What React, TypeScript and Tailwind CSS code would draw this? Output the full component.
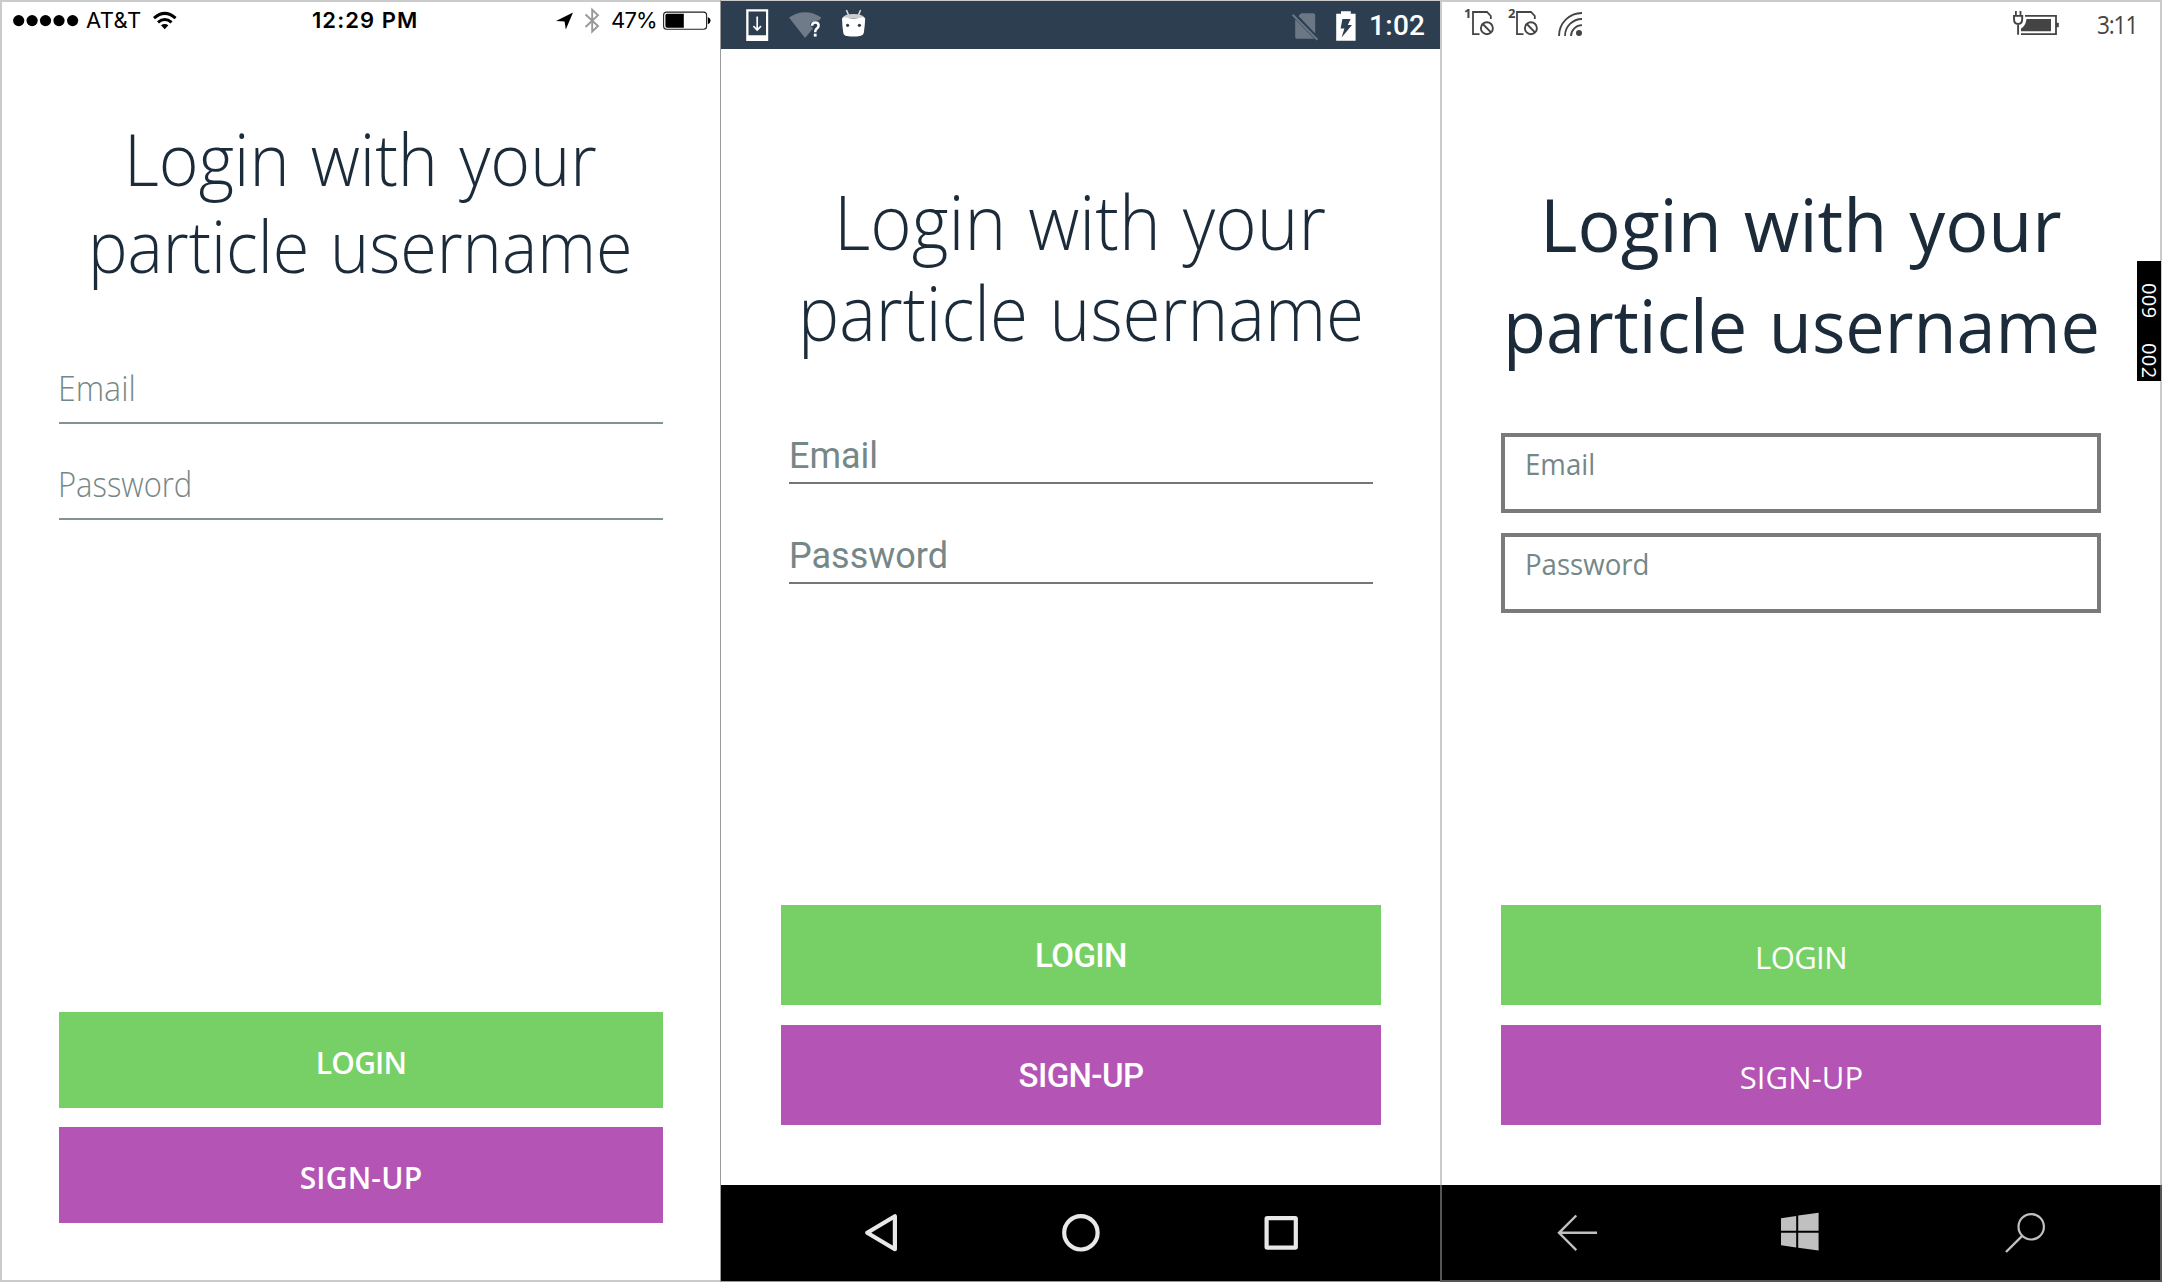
import React from "react";

/* ---------- status bar icons ---------- */

function SignalDots() {
  return (
    <svg className="ml-[11px] mt-[12px] h-[14px] w-[66px] shrink-0" viewBox="13 14 66 14">
      {[18.7, 32.1, 45.5, 59, 72.6].map((cx) => (
        <circle key={cx} cx={cx} cy="20.6" r="5.6" fill="#000" />
      ))}
    </svg>
  );
}

function IosWifi() {
  return (
    <svg className="ml-[11px] mt-[8px] h-[20px] w-[26px] shrink-0" viewBox="152 10 26 20">
      <g fill="none" stroke="#000" strokeWidth="3">
        <path d="M154 18.2 Q164.7 8.6 175.6 18.2" />
        <path d="M158 22.3 Q164.7 16.6 171.6 22.3" />
      </g>
      <path d="M161 25.3 Q164.7 22.6 168.4 25.3 L164.7 29.3 Z" fill="#000" />
    </svg>
  );
}

function LocationArrow() {
  return (
    <svg className="ml-[139px] mt-[10px] h-[19px] w-[19px] shrink-0" viewBox="555 12 19 19">
      <path d="M573 12.6 L565.8 29.6 L564.6 21.4 L556 21 Z" fill="#000" />
    </svg>
  );
}

function Bluetooth() {
  return (
    <svg className="ml-[9px] mt-[5px] h-[28px] w-[18px] shrink-0" viewBox="583 7 18 28">
      <path
        d="M585.5 14.5 L598 26 L592.2 31.5 V9.8 L598 15.3 L585.5 27"
        fill="none"
        stroke="#999"
        strokeWidth="1.9"
      />
    </svg>
  );
}

function IosBattery() {
  return (
    <svg className="ml-[5px] mt-[9px] h-[20px] w-[50px] shrink-0" viewBox="662 11 50 20">
      <rect x="663.6" y="12.1" width="43" height="17.2" rx="3" fill="none" stroke="#222" strokeWidth="1.1" />
      <path d="M667 13.8 H683.8 V27.7 H667 Q665.4 27.7 665.4 26 V15.5 Q665.4 13.8 667 13.8 Z" fill="#000" />
      <path d="M707.8 17 Q710.6 18 710.6 20.6 Q710.6 23.2 707.8 24.2 Z" fill="#000" />
    </svg>
  );
}

function DownloadDevice() {
  return (
    <svg className="ml-[25px] mt-[8px] h-[33px] w-[23px] shrink-0" viewBox="746 9 23 33">
      <path fillRule="evenodd" d="M746.2 9.3 H768.2 V41 H746.2 Z M748.5 11.5 V35.2 H766 V11.5 Z" fill="#fff" />
      <path d="M757.2 16.5 V29.5 M753.4 26.2 L757.2 30 L761 26.2" fill="none" stroke="#fff" strokeWidth="1.7" />
    </svg>
  );
}

function AndroidWifi() {
  return (
    <svg className="ml-[19px] mt-[10px] h-[28px] w-[35px] shrink-0" viewBox="788 11 35 28">
      <path d="M789 17.6 Q805 6.8 821.3 17.6 L819 20.6 Q813.5 19.8 810.4 23 Q809.4 26 812 27 L813 28.5 L805 38 Z" fill="#6f7b88" />
      <path
        d="M812 25.8 Q812.2 22.4 815.4 22.4 Q818.6 22.4 818.6 25.5 Q818.6 27.2 816.8 28.6 Q815.2 29.9 815.2 32.2"
        fill="none"
        stroke="#fff"
        strokeWidth="2.5"
      />
      <rect x="813.8" y="33.7" width="2.8" height="2.9" fill="#fff" />
    </svg>
  );
}

function AndroidHead() {
  return (
    <svg className="ml-[18px] mt-[8px] h-[29px] w-[26px] shrink-0" viewBox="841 9 26 29">
      <path d="M846.4 10 L848.8 15.6 M860.6 10 L858.2 15.6" stroke="#ddd" strokeWidth="1.5" />
      <path d="M842.6 18 Q844 14 853.5 13.9 Q863 14 864.6 18 Z" fill="#ccc" />
      <path d="M842 18.6 Q843 16.8 846 17.6 Q853.5 19.4 861 17.6 Q864.2 16.8 865.2 18.6 Q864.8 27 863.8 33 Q863.2 35.6 860 36 Q853.5 37.2 847 36 Q843.8 35.6 843.3 33 Q842.2 27 842 18.6 Z" fill="#fff" />
      <circle cx="847.6" cy="25.3" r="1.6" fill="#2c3e50" />
      <circle cx="859.4" cy="25.3" r="1.6" fill="#2c3e50" />
    </svg>
  );
}

function NoSim() {
  return (
    <svg className="ml-auto mt-[11px] h-[29px] w-[28px] shrink-0" viewBox="1291 11 28 29">
      <path d="M1301 12.2 H1313.5 Q1315.2 12.2 1315.2 14 V32.5 L1298.5 15 Z" fill="#6b7784" />
      <path d="M1295.2 18.3 L1314 37.4 Q1313.6 37.8 1313 37.8 H1297 Q1295.2 37.8 1295.2 36 Z" fill="#6b7784" />
      <path d="M1292.6 13.8 L1317.4 38.8" stroke="#6b7784" strokeWidth="2" />
    </svg>
  );
}

function ChargingBattery() {
  return (
    <svg className="ml-[16px] mt-[9px] h-[31px] w-[21px] shrink-0" viewBox="1335 9 21 31">
      <path d="M1341 10.2 H1350.8 V12.7 H1355.6 V39.8 H1336.2 V12.7 H1341 Z" fill="#fff" />
      <path d="M1342.4 18 H1350.6 L1347.8 24 H1352 L1341.6 36.6 L1344.4 27.6 H1340.6 Z" fill="#2c3e50" />
    </svg>
  );
}

function SimBlocked({ slot }: { slot: "1" | "2" }) {
  return (
    <div className="flex h-[36px] w-[32px] shrink-0">
      <span className="mt-[2px] w-[7px] font-['Open_Sans',sans-serif] text-[13px] leading-[18px] font-bold text-[#444]">{slot}</span>
      <svg className="mt-[8px] h-[27px] w-[24px] shrink-0" viewBox="1472 11 24 27">
        <path d="M1480.5 35.2 H1474 V13 H1488 L1491.8 17 V20" fill="none" stroke="#444" strokeWidth="1.8" />
        <circle cx="1487.9" cy="29.2" r="6" fill="none" stroke="#444" strokeWidth="1.9" />
        <path d="M1483.8 25 L1492 33.4" stroke="#444" strokeWidth="1.9" />
      </svg>
    </div>
  );
}

function CellWifi() {
  return (
    <svg className="ml-[17px] mt-[9px] h-[27px] w-[26px] shrink-0" viewBox="1558 11 26 27">
      <g fill="none" stroke="#444" strokeWidth="1.8">
        <path d="M1560 36 A23 23 0 0 1 1583 13" />
        <path d="M1566 36 A17 17 0 0 1 1583 19" />
        <path d="M1572 36 A11 11 0 0 1 1583 25.2" />
      </g>
      <circle cx="1580" cy="33" r="3" fill="#444" />
    </svg>
  );
}

function PluggedBattery() {
  return (
    <svg className="ml-auto mt-[8px] h-[27px] w-[49px] shrink-0" viewBox="2012 10 49 27">
      <path d="M2025 15.8 H2056 V34.2 H2021" fill="none" stroke="#444" strokeWidth="1.8" />
      <rect x="2056" y="22.8" width="2.8" height="4.4" fill="#444" />
      <path d="M2026.5 19 H2051 V31.2 H2021 V28.5 Q2025 26 2026 21.5 Z" fill="#444" />
      <path d="M2015.9 11 V16 M2020.5 11 V16" stroke="#444" strokeWidth="1.8" />
      <path d="M2013 15.9 H2023.2 M2014 16 V19 Q2014 24 2018.1 24 Q2022.2 24 2022.2 19 V16 M2018.1 24 V34.8" fill="none" stroke="#444" strokeWidth="1.9" />
    </svg>
  );
}

/* ---------- navigation bars ---------- */

function AndroidNav() {
  return (
    <nav className="flex h-[96px] items-start bg-black">
      <svg className="ml-[142px] mt-[27px] h-[42px] w-[36px]" viewBox="863 1212 36 42">
        <path d="M867.2 1232.7 L894.9 1216.3 V1249.2 Z" fill="none" stroke="#e8e8e8" strokeWidth="4.2" strokeLinejoin="round" />
      </svg>
      <svg className="ml-[161px] mt-[27px] h-[42px] w-[42px]" viewBox="1060 1212 42 42">
        <circle cx="1080.9" cy="1232.8" r="16.7" fill="none" stroke="#e8e8e8" strokeWidth="4.2" />
      </svg>
      <svg className="ml-[161px] mt-[29px] h-[38px] w-[38px]" viewBox="1263 1214 38 38">
        <rect x="1266.6" y="1218.2" width="29.2" height="29.4" rx="0.6" fill="none" stroke="#e8e8e8" strokeWidth="4.2" />
      </svg>
    </nav>
  );
}

function WindowsNav() {
  return (
    <nav className="-mx-[2px] flex h-[97px] items-start border-x-2 border-b-2 border-[#555] bg-black">
      <svg className="ml-[113px] mt-[27px] h-[42px] w-[44px]" viewBox="1555 1212 44 42">
        <path d="M1597 1232.8 H1559.2 M1576.3 1215.5 L1559 1232.8 L1576.3 1250.2" fill="none" stroke="#c0c0c0" strokeWidth="2.4" />
      </svg>
      <svg className="ml-[180px] mt-[26px] h-[42px] w-[42px]" viewBox="1779 1211 42 42">
        <g fill="#c0c0c0">
          <path d="M1781 1218.2 L1796.2 1216 V1230.8 H1781 Z" />
          <path d="M1798.2 1215.6 L1818.6 1212.8 V1230.8 H1798.2 Z" />
          <path d="M1781 1232.8 H1796.2 V1247.4 L1781 1245.3 Z" />
          <path d="M1798.2 1232.8 H1818.6 V1250.6 L1798.2 1247.8 Z" />
        </g>
      </svg>
      <svg className="ml-[182px] mt-[26px] h-[44px] w-[46px]" viewBox="2003 1211 46 44">
        <circle cx="2031.2" cy="1226.8" r="12.7" fill="none" stroke="#c0c0c0" strokeWidth="2.2" />
        <path d="M2022.2 1235.8 L2006 1252" stroke="#c0c0c0" strokeWidth="2.4" />
      </svg>
    </nav>
  );
}

/* ---------- screens ---------- */

function IosScreen() {
  return (
    <section className="flex h-[1282px] w-[720px] shrink-0 flex-col border-t-2 border-b-2 border-l-2 border-[#cbcbcb] bg-white">
      <header className="flex h-[44px] shrink-0 items-start font-['Inter',sans-serif] text-[22px] leading-[37px] whitespace-nowrap text-black">
        <SignalDots />
        <span className="ml-[7px] w-[55px] tracking-[0.4px]">AT&amp;T</span>
        <IosWifi />
        <span className="ml-[134px] w-[104px] font-semibold tracking-[1.07px]">12:29 PM</span>
        <LocationArrow />
        <Bluetooth />
        <span className="ml-[10px] w-[46px] tracking-[-0.8px]">47%</span>
        <IosBattery />
      </header>
      <h1 className="mt-[69px] font-['Open_Sans',sans-serif] text-[72px] leading-[86.6px] font-light whitespace-nowrap text-[#1b2b3a] [word-spacing:3.7px]">
        <span className="ml-[122px] block w-[520px] origin-left scale-x-[0.944]">Login with your</span>
        <span className="ml-[86px] block w-[600px] origin-left scale-x-[0.924]">particle username</span>
      </h1>
      <div className="ml-[57px] flex w-[604px] flex-col font-['Open_Sans',sans-serif] text-[34px] leading-[46px] font-light text-[#758787]">
        <div className="mt-[59px] h-[77px] border-b-2 border-[#829395] pt-[18px]">
          <span className="-ml-px block origin-left scale-x-[0.945]">Email</span>
        </div>
        <div className="mt-[19px] h-[77px] border-b-2 border-[#829395] pt-[18px]">
          <span className="-ml-px block origin-left scale-x-[0.91]">Password</span>
        </div>
      </div>
      <div className="mt-auto mb-[57px] ml-[57px] flex w-[604px] flex-col gap-[19px] text-center font-['Open_Sans',sans-serif] text-[30px] leading-[101px] font-semibold text-white">
        <button className="h-[96px] bg-[#77d065] tracking-[-0.8px]">LOGIN</button>
        <button className="h-[96px] bg-[#b455b6] tracking-[0.2px]">SIGN-UP</button>
      </div>
    </section>
  );
}

function AndroidScreen() {
  return (
    <section className="flex h-[1282px] w-[720px] shrink-0 flex-col border-l border-[#999] bg-white">
      <div className="h-px shrink-0 bg-[#cbcbcb]" />
      <header className="flex h-[48px] shrink-0 items-start bg-[#2c3e50]">
        <DownloadDevice />
        <AndroidWifi />
        <AndroidHead />
        <NoSim />
        <ChargingBattery />
        <span className="ml-[13px] w-[71px] font-['Roboto',sans-serif] text-[28px] leading-[50px] font-medium tracking-[0.3px] text-white">1:02</span>
      </header>
      <h1 className="mt-[127px] font-['Open_Sans',sans-serif] text-[75px] leading-[90.7px] font-light whitespace-nowrap text-[#1b2b3a] [word-spacing:4px]">
        <span className="ml-[113px] block w-[540px] origin-left scale-x-[0.9425]">Login with your</span>
        <span className="ml-[77px] block w-[620px] origin-left scale-x-[0.922]">particle username</span>
      </h1>
      <div className="ml-[68px] flex w-[584px] flex-col font-['Roboto',sans-serif] text-[36px] leading-[44px] text-[#758787]">
        <div className="mt-[66px] h-[61px] border-b-2 border-[#767676] pt-[11px]">Email</div>
        <div className="mt-[39px] h-[61px] border-b-2 border-[#767676] pt-[11px]">Password</div>
      </div>
      <div className="mt-auto mb-[60px] ml-[60px] flex w-[600px] flex-col gap-[20px] text-center font-['Roboto',sans-serif] text-[33px] leading-[101px] font-medium text-white">
        <button className="h-[100px] bg-[#77d065] tracking-[-0.6px]">LOGIN</button>
        <button className="h-[100px] bg-[#b455b6] tracking-[-0.6px]">SIGN-UP</button>
      </div>
      <AndroidNav />
      <div className="h-px shrink-0 bg-[#999]" />
    </section>
  );
}

function WindowsScreen() {
  return (
    <section className="relative flex h-[1282px] w-[722px] shrink-0 flex-col border-x-2 border-t-2 border-[#cbcbcb] bg-white">
      <header className="flex h-[46px] shrink-0 items-start pl-[22px]">
        <SimBlocked slot="1" />
        <span className="w-[12px]" />
        <SimBlocked slot="2" />
        <CellWifi />
        <PluggedBattery />
        <span className="ml-[36px] w-[63px] origin-left scale-x-[0.87] font-['Open_Sans',sans-serif] text-[26px] leading-[44px] tracking-[-1.3px] text-[#444]">3:11</span>
      </header>
      <h1 className="mt-[126px] font-['Open_Sans',sans-serif] text-[74px] leading-[100.7px] whitespace-nowrap text-[#1b2b3a] [word-spacing:3.5px]">
        <span className="ml-[98px] block w-[560px] origin-left scale-x-[0.97]">Login with your</span>
        <span className="ml-[61px] block w-[640px] origin-left scale-x-[0.949]">particle username</span>
      </h1>
      <div className="mt-[58px] ml-[59px] flex w-[600px] flex-col gap-[20px] font-['Open_Sans',sans-serif] text-[30px] leading-[40px] text-[#758787]">
        <div className="h-[80px] border-4 border-[#7a7a7a] pt-[7px] pl-[20px]">
          <span className="block origin-left scale-x-[0.92]">Email</span>
        </div>
        <div className="h-[80px] border-4 border-[#7a7a7a] pt-[7px] pl-[20px]">
          <span className="block origin-left scale-x-[0.92]">Password</span>
        </div>
      </div>
      <div className="mt-auto mb-[60px] ml-[59px] flex w-[600px] flex-col gap-[20px] text-center font-['Open_Sans',sans-serif] text-[31px] leading-[105px] text-white">
        <button className="h-[100px] bg-[#77d065] tracking-[-0.6px]">LOGIN</button>
        <button className="h-[100px] bg-[#b455b6] pl-px tracking-[0.1px]">SIGN-UP</button>
      </div>
      <WindowsNav />
      <div className="absolute top-[259px] -right-px h-[120px] w-[24px] bg-black font-['Open_Sans',sans-serif] text-[20px] leading-[24px] font-medium tracking-[0.4px] text-white [writing-mode:vertical-rl]">
        <span className="flex h-full gap-[24px] pt-[22px]">
          <span>009</span>
          <span>002</span>
        </span>
      </div>
    </section>
  );
}

export default function App() {
  return (
    <main className="flex h-[1282px] w-[2162px] overflow-hidden bg-white">
      <IosScreen />
      <AndroidScreen />
      <WindowsScreen />
    </main>
  );
}
